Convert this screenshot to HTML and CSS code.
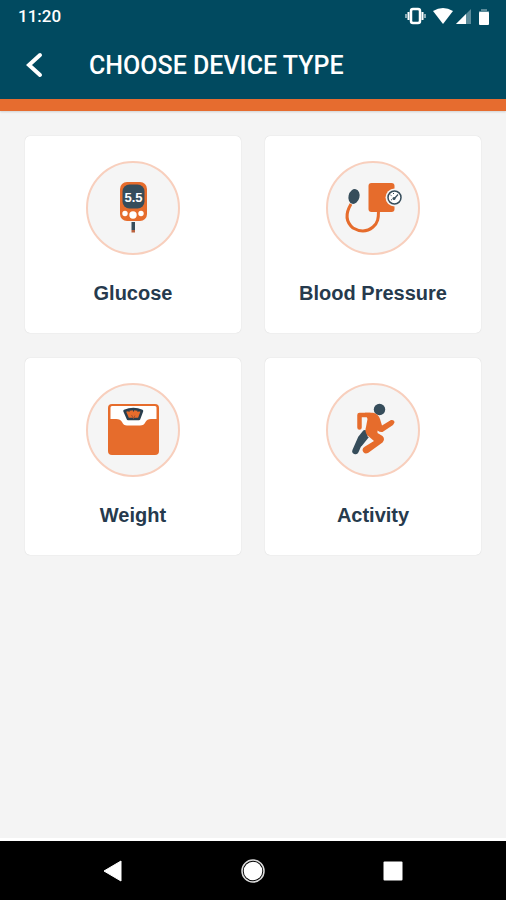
FILE: index.html
```
<!DOCTYPE html>
<html lang="en">
<head>
  <meta charset="UTF-8" />
  <meta name="viewport" content="width=device-width, initial-scale=1" />
  <title>Choose Device Type</title>
  <link rel="stylesheet" href="styles.css">
</head>
<body>

  <header class="header">
    <!-- Status bar -->
    <div class="status-bar">
      <span class="status-time">11:20</span>
      <svg class="status-icons" width="88" height="20" viewBox="0 0 88 20" aria-hidden="true">
        <rect x="9" y="3" width="9" height="14" rx="2" fill="none" stroke="#fff" stroke-width="2.5" />
        <path d="M6.5 6v8M20.500 6v8" stroke="#fff" stroke-width="2" />
        <path d="M4 8v4M23 8v4" stroke="#b9cdd4" stroke-width="1.5" />
        <path d="M31 5Q41-1 51 5L41 18Z" fill="#fff" />
        <path d="M69 3V18H54Z" fill="#5b8b9a" />
        <path d="M64 8V18H54Z" fill="#fff" />
        <path d="M79 3h6v2h2v3h-10V5h2z" fill="#5b8b9a" />
        <rect x="77" y="6" width="10" height="13" rx="1" fill="#fff" />
      </svg>
    </div>

    <div class="title-bar">
      <button class="back-btn" type="button" aria-label="Back">
        <svg width="20" height="28" viewBox="0 0 20 28" aria-hidden="true">
          <path d="M16 3L5 13L16 23" fill="none" stroke="#fff" stroke-width="4" stroke-linecap="round" />
        </svg>
      </button>
      <h1 class="title">CHOOSE DEVICE TYPE</h1>
    </div>
  </header>

  <!-- Device cards -->
  <main class="device-grid">
    <button class="device-card" type="button">
      <span class="device-icon">
        <svg viewBox="8 8 90 90" aria-hidden="true">
          <rect x="40" y="27" width="27" height="39" rx="7" fill="#e66c2c" />
          <rect x="42.5" y="29.500" width="22" height="24" rx="7" fill="#364d5b" />
          <text class="meter-value" x="53.5" y="47" text-anchor="middle">5.5</text>
          <circle cx="45" cy="58.5" r="2.7" fill="#fff" />
          <circle cx="53" cy="60" r="3.7" fill="#fff" />
          <circle cx="61" cy="58.5" r="2.7" fill="#fff" />
          <rect x="51.5" y="67" width="3.5" height="8" fill="#364d5b" />
          <rect x="51.5" y="75" width="3.5" height="2.5" fill="#b9623e" />
        </svg>
      </span>
      <span class="device-name">Glucose</span>
    </button>

    <button class="device-card" type="button">
      <span class="device-icon">
        <svg viewBox="8 8 90 90" aria-hidden="true">
          <rect x="48.5" y="28" width="26" height="29" rx="3" fill="#e66c2c" />
          <path d="M31 49C25 59 26 67 33 73C40 77 47 77 53 72C58 68 58.5 63 58.5 56" fill="none" stroke="#e66c2c" stroke-width="3" />
          <ellipse cx="34" cy="41.5" rx="5.5" ry="7.5" transform="rotate(14 34 41.5)" fill="#364d5b" />
          <circle cx="74.5" cy="42.5" r="9" fill="#f5f5f5" />
          <circle cx="74.5" cy="42.5" r="6.5" fill="#fff" stroke="#364d5b" stroke-width="1.5" />
          <path d="M74 44L78 39.5" stroke="#364d5b" stroke-width="1.2" />
          <circle cx="74" cy="43.5" r="1.5" fill="#364d5b" />
          <path d="M70.5 40l1 .6M73.5 38v1M71 45l1-.5" stroke="#364d5b" stroke-width="1" />
        </svg>
      </span>
      <span class="device-name">Blood Pressure</span>
    </button>

    <button class="device-card" type="button">
      <span class="device-icon">
        <svg viewBox="8 9 90 90" aria-hidden="true">
          <rect x="28" y="28" width="51" height="51" rx="4" fill="#e66c2c" />
          <path d="M30.5 43V31.5Q30.5 30 32 30H75Q76.5 30 76.5 31.5V43H71Q67 43 65.5 46Q64 49.5 60 49.5H47Q43.5 49.5 42 46Q40.5 43 36 43Z" fill="#fff" />
          <path d="M44.5 35Q53.500 31 62 35L59 43H48Z" fill="#e66c2c" stroke="#293e4e" stroke-width="2.5" stroke-linejoin="round" />
          <path d="M49 34.5v1.500M53.500 33.500v2M58 34.500v1.500" stroke="#293e4e" stroke-width="1" />
          <path d="M51.500 39l2 3.500 1.500-3" fill="none" stroke="#a4532f" stroke-width="1" />
        </svg>
      </span>
      <span class="device-name">Weight</span>
    </button>

    <button class="device-card" type="button">
      <span class="device-icon">
        <svg viewBox="8 9 90 90" aria-hidden="true">
          <circle cx="59.5" cy="33.500" r="5.7" fill="#364d5b" />
          <path d="M45 57.500L41 62.500L35.500 75" fill="none" stroke="#364d5b" stroke-width="6.5" stroke-linecap="round" stroke-linejoin="round" />
          <path d="M43 58.500L47 61.500L41 69" fill="none" stroke="#364d5b" stroke-width="2.500" stroke-linecap="round" />
          <path d="M50 39H39.500V51.500" fill="none" stroke="#e66c2c" stroke-width="4.500" stroke-linecap="round" stroke-linejoin="round" />
          <path d="M45 36.800H53Q58.500 38 60 43L62 49.500L71 44Q74.500 43.500 74.500 46.500L73 49L62.500 56Q60 56.500 57.500 54.500L57.500 57L62.500 60Q65.500 63 62.500 66.500L48 77Q43.500 78.500 42.500 74Q42.500 71.500 45 70.500L54 65L47 59Q44.500 55 46 51L47.500 43Z" fill="#e66c2c" />
        </svg>
      </span>
      <span class="device-name">Activity</span>
    </button>
  </main>

  <!-- System navigation -->
  <nav class="nav-bar" aria-label="System">
    <button class="nav-btn" type="button" aria-label="Back">
      <svg width="24" height="24" viewBox="0 0 24 24" aria-hidden="true">
        <path d="M3 12L20 2V22Z" fill="#fff" stroke="#fff" stroke-linejoin="round" />
      </svg>
    </button>
    <button class="nav-btn" type="button" aria-label="Home">
      <svg width="24" height="24" viewBox="0 0 24 24" aria-hidden="true">
        <circle cx="12" cy="12" r="11" fill="none" stroke="#ddd" stroke-width="1.5" />
        <circle cx="12" cy="12" r="9.3" fill="#fff" />
      </svg>
    </button>
    <button class="nav-btn" type="button" aria-label="Recent apps">
      <svg width="24" height="24" viewBox="0 0 24 24" aria-hidden="true">
        <rect x="2.5" y="2.5" width="19" height="19" rx="1" fill="#fff" />
      </svg>
    </button>
  </nav>

</body>
</html>
```
FILE: styles.css
```
/* Reset */
* {
  margin: 0;
  padding: 0;
  box-sizing: border-box;
}

body {
  min-height: 100vh;
  display: flex;
  flex-direction: column;
  background: #f4f4f4;
  font-family: "Liberation Sans", Arial, sans-serif;
}

button {
  border: none;
  background: none;
  font: inherit;
  cursor: pointer;
}

svg {
  display: block;
}

/* Header */
.header {
  background: #014a60;
  color: #fff;
  border-bottom: 12px solid #e66c2f;
  font-family: Roboto, sans-serif;
  box-shadow: 0 1px 2px rgba(0, 0, 0, 0.15);
}

.status-bar {
  height: 32px;
  padding: 0 16px 0 18px;
  display: flex;
  align-items: center;
  justify-content: space-between;
}

.status-time {
  font-size: 17px;
  font-weight: 500;
}

.title-bar {
  height: 67px;
  padding: 0 24px;
  display: flex;
  align-items: center;
  gap: 45px;
}

.title {
  font-size: 25px;
  font-weight: 500;
}

/* Device cards */
.device-grid {
  flex: 1;
  display: grid;
  grid-template-columns: 1fr 1fr;
  align-content: start;
  gap: 25px 24px;
  padding: 25px;
}

.device-card {
  display: flex;
  flex-direction: column;
  align-items: center;
  gap: 26px;
  padding: 25px 8px 27px;
  background: #fff;
  border-radius: 5px;
  box-shadow: 0 0 1px rgba(0, 0, 0, 0.2);
}

.device-icon {
  width: 94px;
  height: 94px;
  border: 2px solid #f8cfbd;
  border-radius: 50%;
  background: #f5f5f5;
}

.meter-value {
  fill: #fff;
  font-size: 13px;
  font-weight: bold;
}

.device-name {
  color: #263a4d;
  font-size: 20px;
  font-weight: bold;
  line-height: 25px;
}

/* System navigation */
.nav-bar {
  height: 62px;
  padding: 0 43px;
  display: flex;
  align-items: center;
  background: #000;
  border-top: 3px solid #fff;
}

.nav-btn {
  flex: 1;
  display: flex;
  justify-content: center;
}
```
